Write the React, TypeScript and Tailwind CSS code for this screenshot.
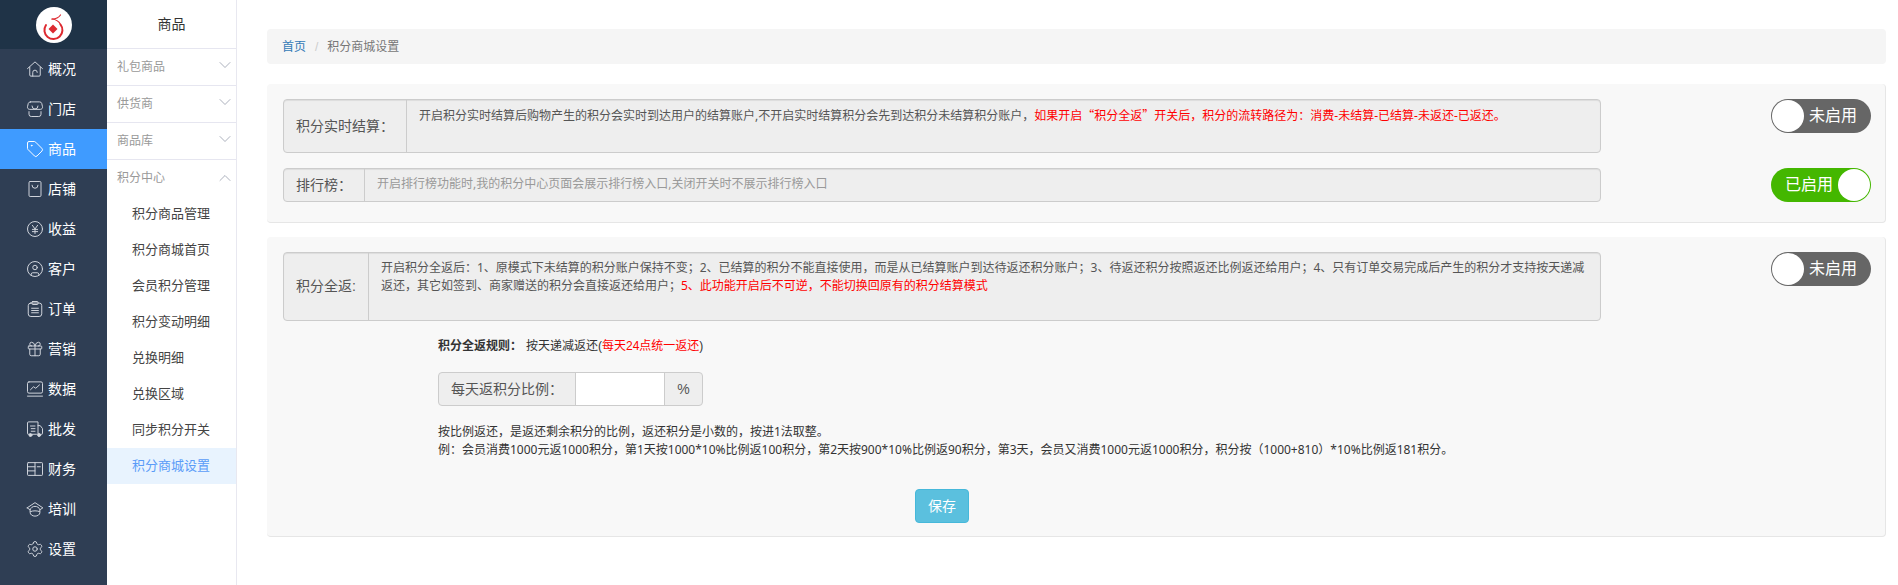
import React from 'react';
import { ChevronDown, ChevronUp, Gift, Settings, Tag, CircleUser } from 'lucide-react';

const svgProps = {
  width: 18,
  height: 18,
  viewBox: '0 0 24 24',
  fill: 'none',
  stroke: 'currentColor',
  strokeWidth: 1.3,
  strokeLinecap: 'round' as const,
  strokeLinejoin: 'round' as const,
};

const HomeIcon = () => (
  <svg {...svgProps}>
    <path d="M2 11.5 12 2.5l10 9" />
    <path d="M5 9.5V20a1.5 1.5 0 0 0 1.5 1.5h11A1.5 1.5 0 0 0 19 20V9.5" />
    <path d="M9 21.5v-5a3 3 0 0 1 6 0" />
  </svg>
);

const StoreIcon = () => (
  <svg {...svgProps}>
    <path d="M6 2.5h12a3 3 0 0 1 3 2.2l1 4.3c.3 2-1 3.5-3 3.5H5c-2 0-3.3-1.500-3-3.500l1-4.300a3 3 0 0 1 3-2.200z" />
    <path d="M8 8a4 4 0 0 0 8 0" />
    <path d="M4 15.500V19a3 3 0 0 0 3 3h10a3 3 0 0 0 3-3v-3.500" />
  </svg>
);

const BagIcon = () => (
  <svg {...svgProps}>
    <rect x="4" y="2" width="16" height="20" rx="1.500" />
    <path d="M8 7a4 4 0 0 0 8 0" />
  </svg>
);

const YenIcon = () => (
  <svg {...svgProps}>
    <circle cx="12" cy="12" r="10" />
    <path d="m8.500 7 3.500 5 3.500-5M12 12v6M8.500 12.500h7M8.500 15.500h7" />
  </svg>
);

const OrderIcon = () => (
  <svg {...svgProps}>
    <rect x="3" y="4" width="18" height="18" rx="3.500" />
    <rect x="8" y="2" width="8" height="4" rx="1" />
    <path d="M7.500 11h9M7.500 14h9M7.500 17h9" />
  </svg>
);

const ChartIcon = () => (
  <svg {...svgProps}>
    <rect x="2" y="2.500" width="20" height="15" rx="2" />
    <path d="m6 13 4-4 3 2 5-4.500M2 21.500h20" />
  </svg>
);

const TruckIcon = () => (
  <svg {...svgProps}>
    <path d="M4 19H3a1 1 0 0 1-1-1V4a1.500 1.500 0 0 1 1.500-1.500H16V19" />
    <path d="M16 7.500h3l3 4V18a1 1 0 0 1-1 1h-1" />
    <path d="M6 8h6M7 11.500h5M7 15h5" />
    <path d="M8 19h6" />
    <circle cx="6" cy="20" r="2" fill="currentColor" />
    <circle cx="17.500" cy="20" r="2" fill="currentColor" />
  </svg>
);

const BookIcon = () => (
  <svg {...svgProps}>
    <rect x="2" y="3.500" width="20" height="17" rx="1" />
    <path d="M12 3.500v17M2 9h10M2 14.500h10M15 9h4" />
  </svg>
);

const CapIcon = () => (
  <svg {...svgProps}>
    <path d="M1.500 10.500 12 3.500l10.500 7-4 2.500" />
    <path d="M5.500 13 1.500 10.500" />
    <path d="M5.500 13c1-3 3.500-4.500 6.500-4.500s5.500 1.500 6.500 4.500v4c0 2.500-3 4.500-6.500 4.500s-6.500-2-6.500-4.500z" />
    <path d="M6 15.500c3.500-1.500 8.500-1.500 12 0" />
  </svg>
);

const navItems = [
  { label: '概况', icon: <HomeIcon /> },
  { label: '门店', icon: <StoreIcon /> },
  { label: '商品', icon: <Tag size={18} strokeWidth={1.3} />, active: true },
  { label: '店铺', icon: <BagIcon /> },
  { label: '收益', icon: <YenIcon /> },
  { label: '客户', icon: <CircleUser size={18} strokeWidth={1.3} /> },
  { label: '订单', icon: <OrderIcon /> },
  { label: '营销', icon: <Gift size={18} strokeWidth={1.3} /> },
  { label: '数据', icon: <ChartIcon /> },
  { label: '批发', icon: <TruckIcon /> },
  { label: '财务', icon: <BookIcon /> },
  { label: '培训', icon: <CapIcon /> },
  { label: '设置', icon: <Settings size={18} strokeWidth={1.3} /> },
];

const groups = ['礼包商品', '供货商', '商品库'];

const subItems = ['积分商品管理', '积分商城首页', '会员积分管理', '积分变动明细', '兑换明细', '兑换区域', '同步积分开关', '积分商城设置'];

const Toggle = ({ on }: { on?: boolean }) =>
  on ? (
    <div className="flex h-[34px] w-[100px] shrink-0 items-center justify-between rounded-full bg-[#44b700] pl-[14px] pr-px text-[16px] leading-[34px] text-white">
      <span>已启用</span>
      <span className="h-8 w-8 rounded-full bg-white" />
    </div>
  ) : (
    <div className="flex h-[34px] w-[100px] shrink-0 items-center rounded-full bg-[#666666] pl-px text-[16px] leading-[34px] text-white">
      <span className="h-8 w-8 rounded-full bg-white" />
      <span className="ml-[5px]">未启用</span>
    </div>
  );

const InfoBox = ({ label, height, children }: { label: string; height: string; children: React.ReactNode }) => (
  <div className={`flex w-[1318px] rounded border border-[#cccccc] bg-[#eeeeee] shadow-[inset_0_1px_1px_rgba(0,0,0,0.075)] ${height}`}>
    <div className="flex shrink-0 items-center border-r border-[#cccccc] px-3 text-[14px] text-[#555555]">{label}</div>
    <div className="flex-1 px-3 py-[6px] font-['Noto_Sans','Noto_Sans_CJK_SC',sans-serif] text-[12px] leading-[18px]">{children}</div>
  </div>
);

const Logo = () => (
  <svg width="36" height="36" viewBox="0 0 36 36">
    <circle cx="18" cy="18" r="18" fill="#ffffff" />
    <path d="M10 18A9 9 0 1 0 24.500 17.500" fill="none" stroke="#dd2a30" strokeWidth="2" strokeLinecap="round" />
    <path d="M24.500 17.500C23 14 20 12.500 16 12" fill="none" stroke="#dd2a30" strokeWidth="1.200" strokeLinecap="round" />
    <path d="M16 12C19 12 22.500 11 24.500 8" fill="none" stroke="#dd2a30" strokeWidth="1.200" strokeLinecap="round" />
    <path d="m17 17.500 4.500 4.500-4.500 4.500-4.500-4.500z" fill="#dd2a30" />
  </svg>
);

export default function App() {
  return (
    <div className="flex min-h-[585px] bg-white font-['Liberation_Sans','Noto_Sans_CJK_SC',sans-serif]">
      {/* main nav */}
      <aside className="w-[107px] shrink-0 bg-[#2f3e54] text-white">
        <div className="flex h-[49px] items-center justify-center bg-[#1f3347]">
          <Logo />
        </div>
        {navItems.map(item => (
          <div
            key={item.label}
            className={`flex h-10 items-center gap-1 pl-[26px] text-[14px] ${item.active ? 'bg-[#3f9bff]' : ''}`}
          >
            <span className={item.active ? 'text-white' : 'text-[#d3d7de]'}>{item.icon}</span>
            {item.label}
          </div>
        ))}
      </aside>

      {/* sub nav */}
      <aside className="w-[130px] shrink-0 border-r border-[#e8e8f0]">
        <div className="flex h-[49px] items-center justify-center border-b border-[#e6e6f0] text-[14px] text-[#333333]">商品</div>
        {groups.map(g => (
          <div key={g} className="flex h-[37px] items-center justify-between border-b border-[#e6e6f0] pl-[10px] pr-px text-[12px] text-[#999999]">
            {g}
            <ChevronDown size={20} strokeWidth={1} className="mb-1 text-[#9ba1b0]" />
          </div>
        ))}
        <div className="flex h-9 items-center justify-between pl-[10px] pr-px text-[12px] text-[#999999]">
          积分中心
          <ChevronUp size={20} strokeWidth={1} className="text-[#9ba1b0]" />
        </div>
        {subItems.map((s, i) => (
          <div
            key={s}
            className={`flex h-9 items-center pl-[25px] text-[13px] ${i === subItems.length - 1 ? 'bg-[#e8f3fe] text-[#5a9cf8]' : 'text-[#444444]'}`}
          >
            {s}
          </div>
        ))}
      </aside>

      {/* content */}
      <main className="min-w-0 flex-1 pl-[30px] pr-3 pt-[29px]">
        <div className="flex h-[35px] items-center rounded bg-[#f5f5f5] px-[15px] text-[12px]">
          <span className="text-[#337ab7]">首页</span>
          <span className="px-[9px] text-[#cccccc]">/</span>
          <span className="text-[#777777]">积分商城设置</span>
        </div>

        <section className="mt-5 h-[139px] rounded-sm border-r border-b border-[#e6e6e6] bg-[#f8f8f8] pl-4 pr-[14px] pt-[15px]">
          <div className="flex justify-between">
            <InfoBox label="积分实时结算：" height="h-[54px]">
              <span className="text-[#555555]">开启积分实时结算后购物产生的积分会实时到达用户的结算账户,不开启实时结算积分会先到达积分未结算积分账户，</span>
              <span className="text-[#ff0000]">
                如果开启<span className="font-['Noto_Sans_CJK_SC',sans-serif]">“</span>积分全返<span className="font-['Noto_Sans_CJK_SC',sans-serif]">”</span>开关后，积分的流转路径为：消费-未结算-已结算-未返还-已返还。
              </span>
            </InfoBox>
            <Toggle />
          </div>
          <div className="mt-[15px] flex justify-between">
            <InfoBox label="排行榜：" height="h-[34px]">
              <span className="text-[#999999]">开启排行榜功能时,我的积分中心页面会展示排行榜入口,关闭开关时不展示排行榜入口</span>
            </InfoBox>
            <Toggle on />
          </div>
        </section>

        <section className="mt-[14px] h-[300px] rounded-sm border-r border-b border-[#e6e6e6] bg-[#f8f8f8] pl-4 pr-[14px] pt-[15px]">
          <div className="flex justify-between">
            <InfoBox label="积分全返:" height="h-[69px]">
              <span className="text-[#555555]">开启积分全返后：1、原模式下未结算的积分账户保持不变；2、已结算的积分不能直接使用，而是从已结算账户到达待返还积分账户；3、待返还积分按照返还比例返还给用户；4、只有订单交易完成后产生的积分才支持按天递减返还，其它如签到、商家赠送的积分会直接返还给用户；</span>
              <span className="text-[#ff0000]">5、此功能开启后不可逆，不能切换回原有的积分结算模式</span>
            </InfoBox>
            <Toggle />
          </div>

          <div className="ml-[155px]">
            <div className="mt-4 flex h-[18px] items-center text-[12px] leading-[18px] text-[#333333]">
              <span className="w-[88px] font-bold">积分全返规则：</span>
              <span>
                按天递减返还(<span className="text-[#ff0000]">每天24点统一返还</span>)
              </span>
            </div>
            <div className="mt-[17px] flex h-[34px] w-[265px] rounded border border-[#cccccc] bg-[#eeeeee] text-[14px] text-[#555555]">
              <div className="flex flex-1 items-center px-3">每天返积分比例：</div>
              <input className="w-[90px] border-x border-[#cccccc] bg-white outline-none" />
              <div className="flex w-[37px] items-center justify-center">%</div>
            </div>
            <p className="mt-[17px] font-['Noto_Sans','Noto_Sans_CJK_SC',sans-serif] text-[12px] leading-[18px] text-[#333333]">
              按比例返还，是返还剩余积分的比例，返还积分是小数的，按进1法取整。
              <br />
              例：会员消费1000元返1000积分，第1天按1000*10%比例返100积分，第2天按900*10%比例返90积分，第3天，会员又消费1000元返1000积分，积分按（1000+810）*10%比例返181积分。
            </p>
          </div>
          <button className="ml-[632px] mt-[30px] h-[34px] w-[54px] rounded border border-[#46b8da] bg-[#5bc0de] text-[14px] text-white">保存</button>
        </section>
      </main>
    </div>
  );
}
